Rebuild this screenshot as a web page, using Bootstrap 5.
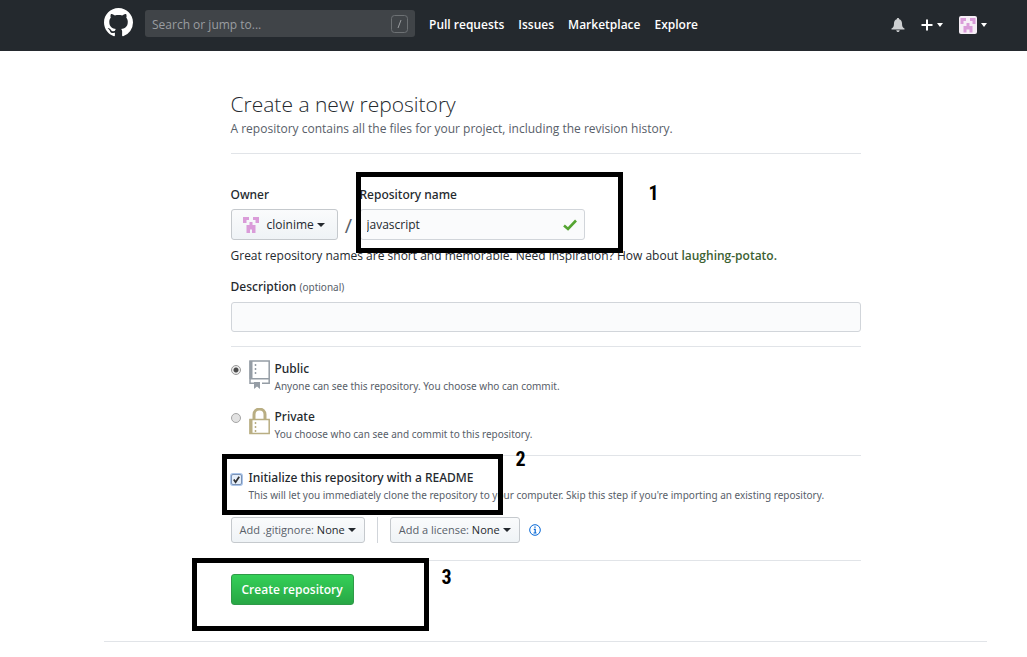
<!DOCTYPE html>
<html lang="en">
<head>
<meta charset="utf-8">
<meta name="viewport" content="width=device-width, initial-scale=1">
<title>Create a new repository</title>
<link href="https://cdn.jsdelivr.net/npm/bootstrap@5.3.0/dist/css/bootstrap.min.css" rel="stylesheet">
<style>
  body { font-family: "Open Sans", "Noto Sans", sans-serif; font-size: 12px; line-height: 20px; color: #24292e; background: #fff; }
  .page-gutter { padding-left: 104px; padding-right: 40px; }
  .muted { color: #586069; }
  .rule { border-bottom: 1px solid #e1e4e8; }

  /* top bar */
  .site-bar { background: #24292e; min-height: 51px; padding-top: 8px; }
  .search-box { width: 270px; margin: 2px 14px 0 12px; }
  .search-box .form-control { height: 27px; padding: 2px 36px 0 7px; font-size: 12px; line-height: 20px; color: #fff; background: #404448; border: 0; border-radius: 3px; }
  .search-box .form-control::placeholder { color: #9a9da0; opacity: 1; }
  .slash-key { top: 5px; right: 7px; }
  .site-nav { gap: 14px; padding-top: 7px; }
  .site-link { color: #fff; font-weight: 600; text-decoration: none; }
  .user-tools { gap: 16px; padding-top: 8px; }
  .bar-btn { color: #fff; background: none; border: 0; padding: 0; gap: 4px; }
  .tri { width: 0; height: 0; flex-shrink: 0; border: 4px solid transparent; border-top-color: currentColor; border-bottom: 0; }
  .bar-btn .tri { border-width: 4px 3px 0; }

  /* form */
  .form-column { max-width: 630px; padding-top: 38px; }
  h1 { font-size: 21px; line-height: 30px; font-weight: 300; }
  .intro { padding-bottom: 14px; }
  .label-text, .choice-title { font-family: "Noto Sans", "Open Sans", sans-serif; font-weight: 500; }
  .label-text { display: block; line-height: 20px; }
  .choice-title { display: block; line-height: 18px; }
  .fine { font-family: "Noto Sans", "Open Sans", sans-serif; font-size: 10px; line-height: 16px; color: #586069; }
  .field { height: 31px; padding: 0 6px; font-size: 12px; line-height: 20px; color: #24292e; background: #fafbfc; border: 1px solid #d1d5da; border-radius: 3px; }
  .grey-btn { color: #24292e; background: linear-gradient(#fafbfc, #eff3f6); border: 1px solid #c5c9cd; border-radius: 3px; padding: 0 8px; gap: 3px; height: 26px; font-size: 11px; line-height: 16px; font-weight: 500; }
  .owner-btn { height: 31px; width: 107px; padding: 0 10px; font-size: 12px; }
  .owner-btn svg { flex-shrink: 0; margin-right: 4px; }
  .names { margin-top: 31px; }
  .name-slash { width: 22px; font-size: 20px; color: #586069; }
  .name-field { width: 225px; }
  .tick { right: 8px; top: 10px; }
  .hint { padding-top: 6px; }
  .suggest { color: #3c6132; font-weight: 600; text-decoration: none; }
  .describe { padding: 11px 0 14px; }
  .describe .field { height: 30px; margin-top: 5px; }

  .choices { padding: 13px 0; gap: 14px; }
  .choice-icon { margin: 0 4px 0 8px; flex-shrink: 0; }
  .form-check-input.pick { width: 10px; height: 10px; margin: 5px 0 0; border: 1px solid #a5a5a5; background: #e2e2e2; }
  .form-check-input.pick:checked { background: radial-gradient(circle, #4a4a4a 0 2px, #ececec 3px); border-color: #999; }
  .form-check-input.tickbox { width: 11px; height: 11px; margin: 5px 0 0; border: 1px solid #7d93b5; border-radius: 2px; background-color: #e6effa; box-shadow: 0 0 0 1px #a9c4ea; }
  .form-check-input.tickbox:checked { background-color: #e6effa; border-color: #7d93b5; background-image: url("data:image/svg+xml,%3csvg xmlns='http://www.w3.org/2000/svg' viewBox='0 0 10 10'%3e%3cpath d='M2 5l2 3 4-6' fill='none' stroke='%23333' stroke-width='2'/%3e%3c/svg%3e"); }

  .readme { padding: 13px 0 17px; }
  .init-label { margin-left: 7px; }
  .extras { margin-top: 14px; gap: 12px; }
  .divider { width: 1px; height: 26px; background: #d1d5da; }
  .help { margin-left: -3px; }
  .submit { padding: 13px 0 36px; }
  .go-btn, .go-btn:hover { color: #fff; background: linear-gradient(#34d058, #28a745); border: 1px solid #2f9a48; border-radius: 3px; height: 31px; padding: 0 10px; font-size: 12px; line-height: 20px; font-weight: 600; }

  /* numbered call-outs drawn over the form */
  .callout-box { position: absolute; border: 5px solid #000; pointer-events: none; z-index: 2; }
  .callout-num { position: absolute; z-index: 2; color: #000; font: bold 20px/20px "Liberation Sans Narrow", "Roboto Condensed", Roboto, sans-serif; }
  .box-1 { left: 125px; top: -13px; width: 267px; height: 81px; }
  .num-1 { left: 418px; top: -2px; }
  .box-2 { left: -9px; top: -15px; width: 281px; height: 61px; }
  .num-2 { left: 285px; top: -20px; }
  .box-3 { left: -39px; top: -3px; width: 237px; height: 73px; }
  .num-3 { left: 211px; top: 6px; }
</style>
</head>
<body>
<header class="site-bar page-gutter d-flex align-items-start">
  <a href="#" aria-label="Homepage">
    <svg class="d-block" width="29" height="29" viewBox="0 0 16 16" fill="#fff"><path fill-rule="evenodd" d="M8 0C3.58 0 0 3.58 0 8c0 3.54 2.29 6.53 5.47 7.59.4.07.55-.17.55-.38 0-.19-.01-.82-.01-1.49-2.01.37-2.53-.49-2.69-.94-.09-.23-.48-.94-.82-1.13-.28-.15-.68-.52-.01-.53.63-.01 1.08.58 1.23.82.72 1.21 1.87.87 2.33.66.07-.52.28-.87.51-1.07-1.78-.2-3.64-.89-3.64-3.95 0-.87.31-1.59.82-2.15-.08-.2-.36-1.02.08-2.12 0 0 .67-.21 2.2.82.64-.18 1.32-.27 2-.27s1.36.09 2 .27c1.53-1.04 2.2-.82 2.2-.82.44 1.1.16 1.92.08 2.12.51.56.82 1.27.82 2.15 0 3.07-1.87 3.75-3.65 3.95.29.25.54.73.54 1.48 0 1.07-.01 1.93-.01 2.2 0 .21.15.46.55.38A8.01 8.01 0 0 0 16 8c0-4.42-3.58-8-8-8z"/></svg>
  </a>
  <div class="search-box position-relative">
    <input class="form-control" type="text" placeholder="Search or jump to..." aria-label="Search or jump to">
    <svg class="slash-key position-absolute" width="17" height="18" viewBox="0 0 17 18" fill="none" stroke="#6d7174"><rect x=".5" y=".5" width="16" height="17" rx="3"/><path d="M10 5 7 13" stroke="#9a9da0"/></svg>
  </div>
  <nav class="site-nav d-flex" aria-label="Main">
    <a class="site-link" href="#">Pull requests</a>
    <a class="site-link" href="#">Issues</a>
    <a class="site-link" href="#">Marketplace</a>
    <a class="site-link" href="#">Explore</a>
  </nav>
  <div class="user-tools d-flex align-items-center ms-auto">
    <button type="button" class="bar-btn" aria-label="Notifications"><svg class="d-block" width="14" height="14" viewBox="0 0 14 14" fill="#cdcfd1"><path d="M7 0c.8 0 1.2.6 1.2 1.2C10 1.700 11 3.300 11 5.200c0 3.300.7 4.500 2.500 5.300v1H.5v-1C2.300 9.700 3 8.500 3 5.200c0-1.900 1-3.500 2.800-4C5.800.6 6.200 0 7 0zM5.300 12.200h3.400C8.600 13.300 7.900 14 7 14s-1.600-.7-1.700-1.800z"/></svg></button>
    <button type="button" class="bar-btn d-flex align-items-center" aria-label="Create new"><svg width="12" height="12" viewBox="0 0 12 12" stroke="#fff" stroke-width="2"><path d="M6 .5v11M.5 6h11"/></svg><span class="tri"></span></button>
    <button type="button" class="bar-btn d-flex align-items-center" aria-label="Account"><svg width="18" height="18" viewBox="0 0 18 18"><rect width="18" height="18" rx="2" fill="#f6eef6"/><path fill="#da9cd9" d="M1.500 2H7v3H4.500v3h-3zM11 2h5.500v6h-3V5H11zM7.500 7h3v3h3v6.500h-3v-3h-3v3h-3V10h3z"/></svg><span class="tri"></span></button>
  </div>
</header>

<main class="page-gutter">
  <div class="rule">
    <form class="form-column mx-auto">
      <h1 class="m-0">Create a new repository</h1>
      <p class="intro muted rule m-0">A repository contains all the files for your project, including the revision history.</p>

      <section class="names position-relative">
        <div class="d-flex">
          <div class="d-flex flex-column gap-1">
            <label class="label-text" for="owner">Owner</label>
            <button type="button" id="owner" class="btn grey-btn owner-btn d-flex align-items-center">
              <svg width="18" height="18" viewBox="0 0 18 18"><path fill="#da9cd9" d="M1 1h6v3H4.500v3H1zM11 1h6v6h-3.500V4H11zM7.500 6h3v3h3v8h-3.500v-3.500h-2V17H4.500V9h3z"/></svg>
              cloinime <span class="tri"></span>
            </button>
          </div>
          <span class="name-slash align-self-end text-center pb-1">/</span>
          <div class="name-field d-flex flex-column gap-1">
            <label class="label-text" for="repo">Repository name</label>
            <div class="position-relative">
              <input id="repo" class="form-control field" type="text" value="javascript">
              <svg class="tick position-absolute" width="14" height="12" viewBox="0 0 14 12" fill="none" stroke="#55a532" stroke-width="2.600"><path d="M1 6.500 5 10 13 1.500"/></svg>
            </div>
          </div>
        </div>
        <div class="callout-box box-1"></div><span class="callout-num num-1">1</span>
        <p class="hint m-0">Great repository names are short and memorable. Need inspiration? How about <a class="suggest" href="#">laughing-potato.</a></p>
      </section>

      <div class="describe rule">
        <label class="label-text" for="desc">Description <span class="fine fw-normal">(optional)</span></label>
        <input id="desc" class="form-control field" type="text">
      </div>

      <div class="choices rule d-flex flex-column">
        <div class="d-flex">
          <input class="form-check-input pick flex-shrink-0" type="radio" name="visibility" id="pub" checked>
          <svg class="choice-icon" width="22" height="29" viewBox="0 0 22 29" fill="none" stroke="#959da5" stroke-width="1.500"><path d="M13 23.200h7.200V1H1v22.200h4M1 18.700h19.200"/><path d="M2 1v18" stroke-width="3"/><path d="M6.500 4v12" stroke-dasharray="2 2"/><path d="M5 22h6v7l-3-2.500L5 29z" fill="#959da5" stroke="none"/></svg>
          <label for="pub"><span class="choice-title">Public</span><span class="fine d-block">Anyone can see this repository. You choose who can commit.</span></label>
        </div>
        <div class="d-flex">
          <input class="form-check-input pick flex-shrink-0" type="radio" name="visibility" id="priv">
          <svg class="choice-icon" width="22" height="29" viewBox="0 0 22 29" fill="none" stroke="#b9ae83" stroke-width="1.500"><path d="M1 11.500h19.200V25.500H1z"/><path d="M2 11v15" stroke-width="3"/><path d="M5 11V6.500a5.500 5.500 0 0 1 11 0V11" stroke-width="3"/><path d="M6.500 14v10" stroke-dasharray="2 2"/></svg>
          <label for="priv"><span class="choice-title">Private</span><span class="fine d-block">You choose who can see and commit to this repository.</span></label>
        </div>
      </div>

      <section class="readme rule">
        <div class="position-relative">
          <div class="d-flex">
            <input class="form-check-input tickbox flex-shrink-0" type="checkbox" id="init" checked>
            <label for="init" class="init-label"><span class="choice-title">Initialize this repository with a README</span><span class="fine d-block">This will let you immediately clone the repository to your computer. Skip this step if you're importing an existing repository.</span></label>
          </div>
          <div class="callout-box box-2"></div><span class="callout-num num-2">2</span>
        </div>
        <div class="extras d-flex align-items-center">
          <button type="button" class="btn grey-btn d-flex align-items-center"><span><span class="muted fw-normal">Add .gitignore:</span> None</span><span class="tri"></span></button>
          <span class="divider"></span>
          <button type="button" class="btn grey-btn d-flex align-items-center"><span><span class="muted fw-normal">Add a license:</span> None</span><span class="tri"></span></button>
          <a href="#" aria-label="License help" class="help"><svg class="d-block" width="12" height="12" viewBox="0 0 12 12" fill="none" stroke="#0366d6"><circle cx="6" cy="6" r="5.300"/><path d="M4.800 5.300H6.200V9M4.500 9h3M5.300 3.200h1.400" stroke-width="1.200"/></svg></a>
        </div>
      </section>

      <div class="submit position-relative">
        <button type="submit" class="btn go-btn d-block">Create repository</button>
        <div class="callout-box box-3"></div><span class="callout-num num-3">3</span>
      </div>
    </form>
  </div>
</main>
<script src="https://cdn.jsdelivr.net/npm/bootstrap@5.3.0/dist/js/bootstrap.bundle.min.js"></script>
</body>
</html>
